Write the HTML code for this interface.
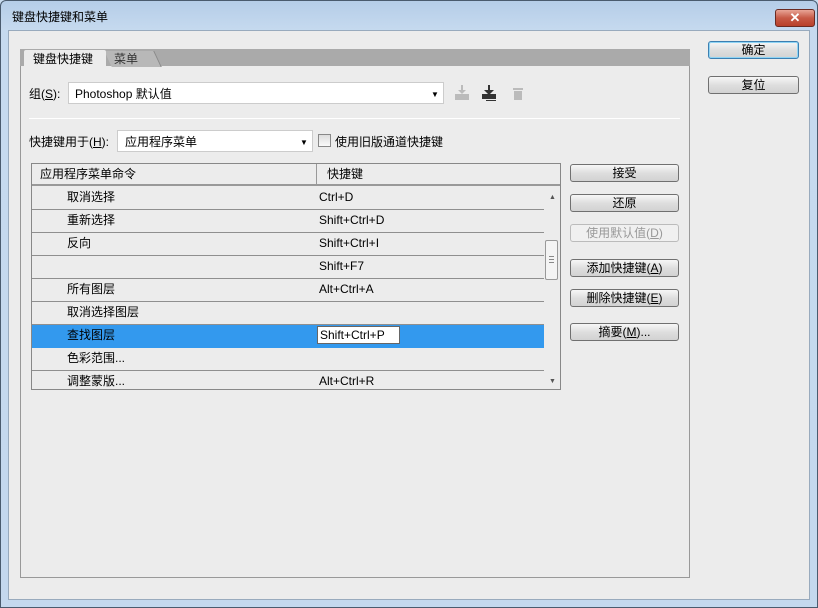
<!DOCTYPE html>
<html><head><meta charset="utf-8"><style>
*{box-sizing:border-box;margin:0;padding:0}
body{width:818px;height:608px;overflow:hidden;background:#c9dcf0;font-family:"Liberation Sans","Noto Sans CJK SC",sans-serif;font-size:12px;line-height:14px;color:#000;position:relative}
.abs{position:absolute}
.frame{left:0;top:0;width:818px;height:608px;border:1px solid #4a5b6e;border-radius:6px 6px 0 0;background:linear-gradient(#b5cde8,#c6daef 30px,#c4d8ee)}
.client{left:8px;top:30px;width:802px;height:570px;background:#ececec;border:1px solid #98aabd}
.btn{position:absolute;height:18px;border:1px solid #707070;border-radius:3px;background:linear-gradient(#f6f6f6,#dedede 50%,#d2d2d2);text-align:center;line-height:16px;font-size:12px}
.row{position:absolute;left:32px;width:512px;height:23px;border-bottom:1px solid #8f8f8f;background:#ececec}
.row span{position:absolute;top:3px}
.row .a{left:35px}.row .b{left:287px}
</style></head><body>
<div class="abs frame"></div>
<div class="abs" style="left:12px;top:10px;font-size:12px">键盘快捷键和菜单</div>
<div class="abs" style="left:775px;top:9px;width:40px;height:18px;border:1px solid #6b2b22;border-radius:3px;background:linear-gradient(#e8a596,#c75a46 50%,#b8402a);color:#fff;text-align:center;line-height:15px;font-weight:bold;font-size:13px">✕</div>
<div class="abs client"></div>
<div class="abs" style="left:20px;top:49px;width:670px;height:17px;background:#aaa"></div>
<div class="abs" style="left:108px;top:51px;width:50px;height:16px;background:#b8b8b8;transform:skewX(25deg);border-right:1px solid #888"></div>
<div class="abs" style="left:114px;top:52px;color:#333">菜单</div>
<div class="abs" style="left:24px;top:50px;width:82px;height:17px;background:#ececec;border-radius:2px 2px 0 0"></div>
<div class="abs" style="left:33px;top:52px">键盘快捷键</div>
<div class="abs" style="left:20px;top:66px;width:670px;height:512px;border:1px solid #999;border-top:none"></div>
<div class="abs" style="left:29px;top:87px">组(<u>S</u>):</div>
<div class="abs" style="left:68px;top:82px;width:376px;height:22px;background:#fff;border:1px solid #ccc"></div>
<div class="abs" style="left:75px;top:87px">Photoshop 默认值</div>
<div class="abs" style="left:431px;top:88px;font-size:8px">▼</div>
<svg class="abs" style="left:453px;top:84px" width="80" height="18">
<g fill="#bbb"><rect x="2" y="10" width="14" height="6"/><rect x="8" y="1" width="2" height="7"/><path d="M5 6h8l-4 4z"/></g>
<g fill="#333"><rect x="29" y="10" width="14" height="5"/><rect x="35" y="1" width="2" height="6"/><path d="M31 6h10l-5 5z"/><rect x="33" y="16" width="10" height="1"/></g>
<g fill="#bbb"><rect x="60" y="4" width="10" height="2"/><rect x="61" y="7" width="8" height="9"/></g>
</svg>
<div class="abs" style="left:29px;top:118px;width:651px;height:1px;background:#bbb;border-bottom:1px solid #fff"></div>
<div class="abs" style="left:29px;top:135px">快捷键用于(<u>H</u>):</div>
<div class="abs" style="left:117px;top:130px;width:196px;height:22px;background:#fff;border:1px solid #ccc"></div>
<div class="abs" style="left:125px;top:135px">应用程序菜单</div>
<div class="abs" style="left:300px;top:136px;font-size:8px">▼</div>
<div class="abs" style="left:318px;top:134px;width:13px;height:13px;border:1px solid #888;background:linear-gradient(#ddd,#fafafa)"></div>
<div class="abs" style="left:335px;top:135px">使用旧版通道快捷键</div>
<div class="abs" style="left:31px;top:163px;width:530px;height:227px;border:1px solid #888;background:#ececec"></div>
<div class="abs" style="left:32px;top:164px;width:528px;height:22px;border-bottom:2px solid #999"></div>
<div class="abs" style="left:316px;top:164px;width:1px;height:22px;background:#999"></div>
<div class="abs" style="left:40px;top:167px">应用程序菜单命令</div>
<div class="abs" style="left:327px;top:167px">快捷键</div>
<div class="row" style="top:187px"><span class="a">取消选择</span><span class="b">Ctrl+D</span></div>
<div class="row" style="top:210px"><span class="a">重新选择</span><span class="b">Shift+Ctrl+D</span></div>
<div class="row" style="top:233px"><span class="a">反向</span><span class="b">Shift+Ctrl+I</span></div>
<div class="row" style="top:256px"><span class="b">Shift+F7</span></div>
<div class="row" style="top:279px"><span class="a">所有图层</span><span class="b">Alt+Ctrl+A</span></div>
<div class="row" style="top:302px"><span class="a">取消选择图层</span></div>
<div class="row" style="top:325px;background:#3399ee;border-bottom-color:#3399ee"><span class="a">查找图层</span></div>
<div class="abs" style="left:317px;top:326px;width:83px;height:18px;background:#fff;border:1px solid #666;padding:1px 2px">Shift+Ctrl+P</div>
<div class="row" style="top:348px"><span class="a">色彩范围...</span></div>
<div class="row" style="top:371px;height:18px;border:none"><span class="a">调整蒙版...</span><span class="b">Alt+Ctrl+R</span></div>
<div class="abs" style="left:544px;top:187px;width:16px;height:202px;background:#ececec"></div>
<div class="abs" style="left:549px;top:191px;font-size:7px;color:#555">▲</div>
<div class="abs" style="left:549px;top:375px;font-size:7px;color:#555">▼</div>
<div class="abs" style="left:545px;top:240px;width:13px;height:40px;border:1px solid #999;border-radius:2px;background:#f4f4f4"></div>
<div class="abs" style="left:549px;top:256px;width:5px;height:7px;border-top:1px solid #888;border-bottom:1px solid #888"></div>
<div class="abs" style="left:549px;top:259px;width:5px;height:1px;background:#888"></div>
<div class="btn" style="left:570px;top:164px;width:109px">接受</div>
<div class="btn" style="left:570px;top:194px;width:109px">还原</div>
<div class="btn" style="left:570px;top:224px;width:109px;color:#999;border-color:#bbb;background:#f0f0f0">使用默认值(<u>D</u>)</div>
<div class="btn" style="left:570px;top:259px;width:109px">添加快捷键(<u>A</u>)</div>
<div class="btn" style="left:570px;top:289px;width:109px">删除快捷键(<u>E</u>)</div>
<div class="btn" style="left:570px;top:323px;width:109px">摘要(<u>M</u>)...</div>
<div class="btn" style="left:708px;top:41px;width:91px;border-color:#3c7fb1;box-shadow:inset 0 0 0 1px #8fd4f4">确定</div>
<div class="btn" style="left:708px;top:76px;width:91px">复位</div>
</body></html>
